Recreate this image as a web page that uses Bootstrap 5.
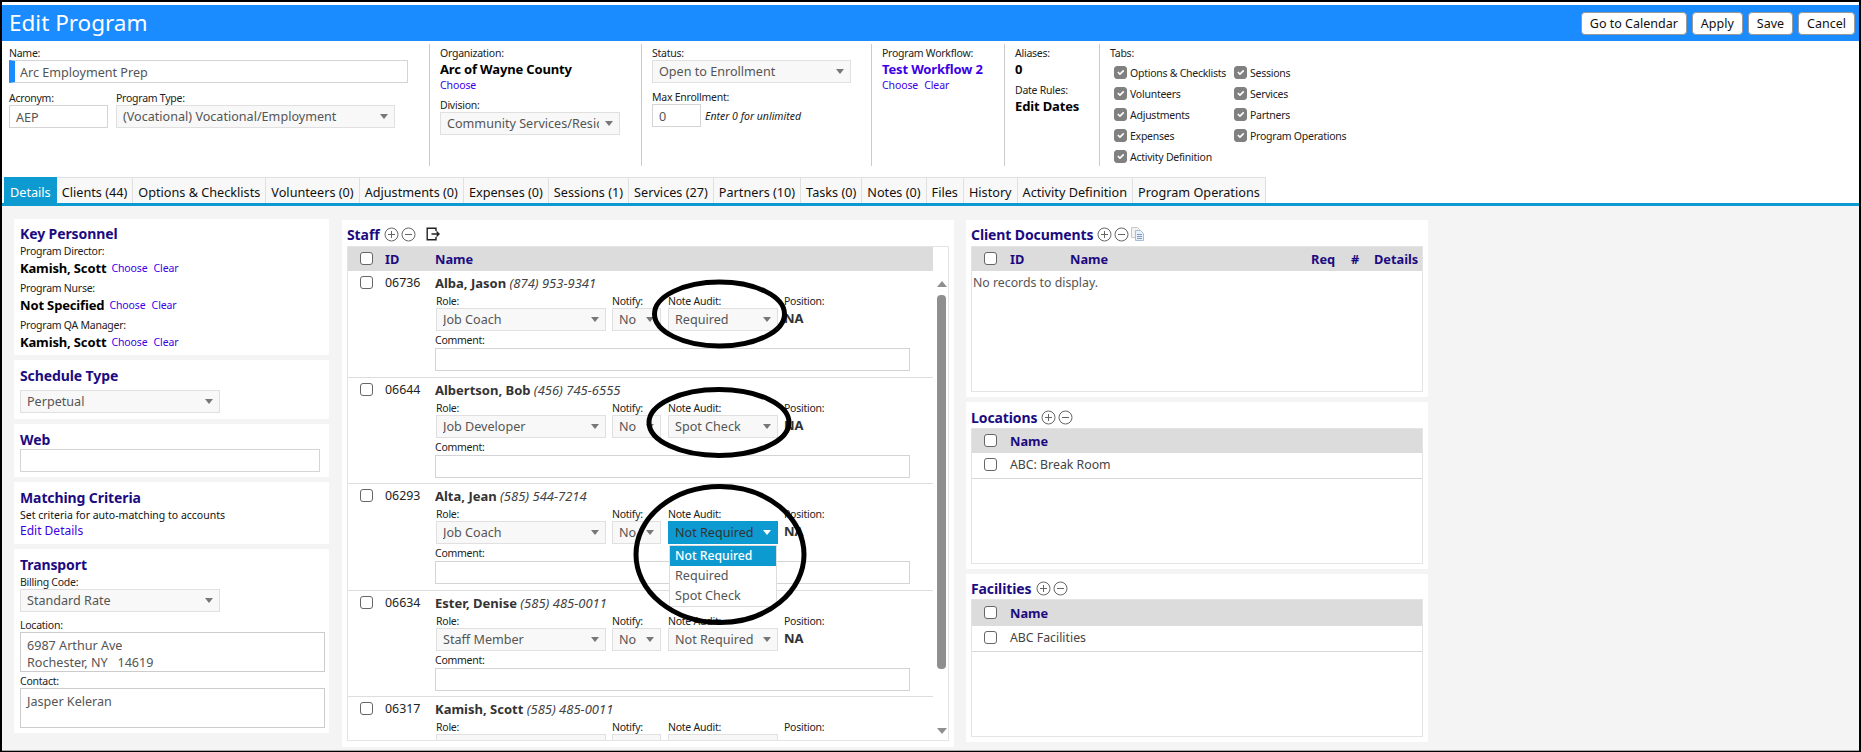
<!DOCTYPE html>
<html lang="en">
<head>
<meta charset="utf-8">
<title>Edit Program</title>
<link rel="stylesheet" href="https://cdn.jsdelivr.net/npm/bootstrap@5.3.0/dist/css/bootstrap.min.css">
<style>
html,body{height:752px;overflow:hidden;background:#000}
body{font-family:"Noto Sans",sans-serif;font-size:12px;color:#222;line-height:14px}
a{color:#3d00e6;text-decoration:none}
.frame{position:relative;width:1861px;height:752px;border:solid #000;border-width:2px 2px 1px;background:#fff;display:flex;flex-direction:column}
.topgap{height:3px;flex:none}
.hdr{height:36px;flex:none;background:#1a8cff;padding:0 4px 0 7px}
.hdr h1{font-size:22.5px;line-height:36px;margin:0;color:#fff;font-weight:400}
.hbtns{gap:5px}
.hbtn{height:23px;padding:0 8px;background:#fff;border:1px solid #999;border-radius:4px;color:#111;font-size:12.5px;line-height:21px;--bs-btn-hover-bg:#fff}
.panel{height:136px;flex:none;padding-top:3px}
.pcol{height:122px;border-left:1px solid #ccc;padding:2px 0 0 10px;flex:none}
.pc1{width:427px;border-left:0;padding-left:7px}
.pc2{width:212px}.pc3{width:230px}.pc4{width:133px}.pc5{width:95px}.pc6{width:300px}
.flabel{font-size:10.5px;letter-spacing:-.25px;line-height:14px;color:#222;display:block;white-space:nowrap}
.strong{font-weight:700;font-size:13px;letter-spacing:-.15px;line-height:18px;color:#000;white-space:nowrap}
.strong-link{color:#3d00e6}
.lnk{font-size:10.5px;letter-spacing:-.1px;line-height:14px}
.lnk a+a{margin-left:6px}
.fld,.fsel{height:23px;border:1px solid #d4d4d4;border-radius:0;padding:1px 6px 0;font-size:12.6px;color:#555;box-shadow:none;background-color:#fff;line-height:20px}
.fsel{background-color:#f8f8f8;border-color:#e0e0e0;padding:1px 20px 0 6px;background-image:url("data:image/svg+xml,%3Csvg xmlns='http://www.w3.org/2000/svg' width='8' height='5'%3E%3Cpath d='M0 0h8L4 5z' fill='%23777'/%3E%3C/svg%3E");background-size:8px 5px;background-position:right 6px center}
.w-name{width:399px;border-left:6px solid #1a8cff;padding-left:5px}
.w-acr{width:99px}.w-type{width:279px}.w-div{width:180px}.w-status{width:199px}.w-max{width:49px}
.w-200{width:200px}.w-web{width:300px}.w-role{width:170px}.w-notify{width:49px}.w-audit{width:110px}.w-comment{width:475px}
.mt-8px{margin-top:8px}.mt-7px{margin-top:7px}.mt-6px{margin-top:6px}.mt-5px{margin-top:5px}.mt-2px{margin-top:2px}
.acr-pad{padding-top:1px;line-height:13px}
.note{font-size:10.5px;font-style:italic;color:#222}
.checks{display:grid;grid-template-rows:repeat(5,21px);grid-auto-flow:column;grid-template-columns:120px 140px;margin:2px 0 0 4px}
.ck{display:flex;align-items:center;gap:3px;font-size:10.5px;letter-spacing:-.25px;white-space:nowrap}
.form-check-input.cb{width:13px;height:13px;margin:0;flex:none;border:1px solid #666;border-radius:3px;box-shadow:none}
.form-check-input.cb:checked{background-color:#808080;border-color:#808080}
.tabbar{flex:none;height:29px;border-bottom:3px solid #0c9ad1;padding-left:2px;gap:0;flex-wrap:nowrap}
.tabbar .nav-link{height:26px;padding:3px 5px 0;font-size:12.68px;line-height:23px;color:#111;background:#f8f8f8;border:1px solid #e0e0e0;border-bottom:0;border-left-width:0;border-radius:0;white-space:nowrap}
.tabbar .nav-item:first-child .nav-link{border-left-width:1px}
.tabbar .nav-link.active{background:#0c9ad1;color:#fff;border-color:#0c9ad1}
.workspace{flex:1 1 auto;min-height:0;background:#f4f4f4;border-bottom:1px solid #aaa;padding-left:12px}
.lcol{width:315px;padding-top:13px;gap:5px;flex:none}
.mcol{width:612px;margin:14px 0 0 13px;flex:none}
.rcol{width:462px;margin:14px 0 0 12px;gap:5px;flex:none}
.pane{background:#fff;border:0;border-radius:0;padding:5px 5px 0 6px}
.ttl{font-size:14px;font-weight:700;letter-spacing:-.1px;line-height:20px;color:#1c0b80;margin:0}
.personnel{height:136px}
.sched{height:59px}.webp{height:53px}.match{height:62px}.trans{height:184px}
.sched,.webp,.match,.trans{padding-top:6px}
.pick{display:flex;align-items:center;gap:5px;height:18px;padding-top:2px}
.pick .lnk{white-space:nowrap}
.mb-neg{margin-bottom:-1px}
.mt-4px{margin-top:4px}
.small12{font-size:10.5px;line-height:14px;color:#111}
.bigl{font-size:12px;line-height:18px}
.area{height:40px;width:305px;border:1px solid #ccc;padding:3.5px 6px;font-size:12.6px;line-height:17px;color:#555;border-radius:0;resize:none;box-shadow:none;display:block;overflow:hidden}
.staffp{height:527px;padding:5px 5px 0}
.headline{margin-bottom:1px}
.tframe{border:1px solid #e4e4e4;display:flex;flex-direction:column}
.stf{height:495px}
.thead-row{height:24px;flex:none;width:585px;background:#dcdcdc;display:flex;align-items:center;font-weight:700;color:#1c0b80;font-size:12.8px;padding:0 0 0 12px}
.c-ck{width:25px;flex:none}
.c-id{width:50px;flex:none}
.tbody{height:470px;overflow:hidden}
.rows{width:585px;flex:none}
.srow{height:106.5px;border-bottom:1px solid #ddd;padding:3px 0 0 12px;display:flex}
.srow .c-ck .cb{margin-top:2px}
.srow .c-id{line-height:18px;font-size:12.4px;color:#222}
.pname{line-height:18px;font-weight:700;font-size:13px;color:#333;white-space:nowrap}
.pname i{font-weight:400;font-size:13px;color:#444}
.cells{display:flex;gap:6px;margin:2px 0 0 1px}
.cells .gap7{margin-left:1px}
.na{font-weight:700;font-size:13px;line-height:18px;color:#333;margin-top:1px}
.fsel.open{background-color:#0c9ad1;border-color:#0c9ad1;color:#333;background-image:url("data:image/svg+xml,%3Csvg xmlns='http://www.w3.org/2000/svg' width='8' height='5'%3E%3Cpath d='M0 0h8L4 5z' fill='%23fff'/%3E%3C/svg%3E")}
.menuw{position:relative}
.audit-menu{display:block;position:absolute;top:24px;left:1px;width:108px;min-width:0;padding:0;margin:0;border:1px solid #ddd;border-radius:0;z-index:5;height:62px;box-shadow:none}
.audit-menu .dropdown-item{padding:0 5px;line-height:20px;height:20px;color:#555;font-size:12.6px}
.audit-menu .dropdown-item.active{background:#0c9ad1;color:#fff;font-weight:500;font-size:12.2px}
.cmt{margin-top:2px}.cmt .fld{margin-top:1px;display:block}
.sbar{width:17px;flex:none;display:flex;flex-direction:column;align-items:center}
.up{width:0;height:0;border:solid transparent;border-width:0 5px 6px;border-bottom-color:#8f8f8f;margin-top:10px}
.dn{width:0;height:0;border:solid transparent;border-width:6px 5px 0;border-top-color:#8f8f8f;margin-top:59px}
.thumb{width:9px;height:374px;background:#8f8f8f;border-radius:4px;margin-top:8px}
.rp{padding:5px 5px 0}
.locs{padding-top:6px}
.docs{height:177px}.locs{height:167px}.facs{height:168px}
.docs .tframe{height:146px}.locs .tframe{height:136px}.facs .tframe{height:138px}
.gtable{--bs-table-bg:transparent;margin:0;table-layout:fixed;font-size:12.3px;color:#444}
.gtable th{background:#dcdcdc;color:#1c0b80;font-weight:700;font-size:12.8px;padding:0;height:24px;vertical-align:middle;border:0;line-height:14px}
.facs .gtable th{height:26px}
.gtable td{padding:0;height:25px;vertical-align:middle;border-bottom:1px solid #d8d8d8;color:#444}
.gtable .cbc{padding-left:12px;width:38px}
.w-id{width:60px}.w-req{width:40px}.w-hash{width:23px}.w-det{width:48px}
.empty{padding:5px 1px;color:#555;font-size:12.3px}
.ico{flex:none;display:block;margin-top:-2px}
.ms-2px{margin-left:2px}.ms-4px{margin-left:4px}.ms-10px{margin-left:10px}
.annot{position:absolute;left:-2px;top:-2px;pointer-events:none;z-index:10}
</style>
</head>
<body>
<div class="frame">
  <div class="topgap"></div>
  <div class="hdr d-flex justify-content-between align-items-center">
    <h1>Edit Program</h1>
    <div class="d-flex hbtns">
      <button class="btn hbtn">Go to Calendar</button>
      <button class="btn hbtn">Apply</button>
      <button class="btn hbtn">Save</button>
      <button class="btn hbtn">Cancel</button>
    </div>
  </div>

  <div class="panel d-flex">
    <div class="pcol pc1">
      <span class="flabel">Name:</span>
      <input class="form-control fld w-name" value="Arc Employment Prep">
      <div class="d-flex gap-2 mt-8px">
        <div class="ms-0"><span class="flabel acr-pad">Acronym:</span><input class="form-control fld w-acr" value="AEP"></div>
        <div><span class="flabel">Program Type:</span><select class="form-select fsel w-type"><option>(Vocational) Vocational/Employment</option></select></div>
      </div>
    </div>
    <div class="pcol pc2">
      <span class="flabel">Organization:</span>
      <div class="strong">Arc of Wayne County</div>
      <div class="lnk"><a href="#">Choose</a></div>
      <span class="flabel mt-6px">Division:</span>
      <select class="form-select fsel w-div"><option>Community Services/Residential</option></select>
    </div>
    <div class="pcol pc3">
      <span class="flabel">Status:</span>
      <select class="form-select fsel w-status"><option>Open to Enrollment</option></select>
      <span class="flabel mt-7px">Max Enrollment:</span>
      <div class="d-flex align-items-center gap-1">
        <input class="form-control fld w-max" value="0">
        <span class="note">Enter 0 for unlimited</span>
      </div>
    </div>
    <div class="pcol pc4">
      <span class="flabel">Program Workflow:</span>
      <div class="strong"><a class="strong-link" href="#">Test Workflow 2</a></div>
      <div class="lnk"><a href="#">Choose</a><a href="#">Clear</a></div>
    </div>
    <div class="pcol pc5">
      <span class="flabel">Aliases:</span>
      <div class="strong">0</div>
      <span class="flabel mt-5px">Date Rules:</span>
      <div class="strong">Edit Dates</div>
    </div>
    <div class="pcol pc6">
      <span class="flabel">Tabs:</span>
      <div class="checks">
        <label class="ck"><input class="form-check-input cb" type="checkbox" checked>Options &amp; Checklists</label>
        <label class="ck"><input class="form-check-input cb" type="checkbox" checked>Volunteers</label>
        <label class="ck"><input class="form-check-input cb" type="checkbox" checked>Adjustments</label>
        <label class="ck"><input class="form-check-input cb" type="checkbox" checked>Expenses</label>
        <label class="ck"><input class="form-check-input cb" type="checkbox" checked>Activity Definition</label>
        <label class="ck"><input class="form-check-input cb" type="checkbox" checked>Sessions</label>
        <label class="ck"><input class="form-check-input cb" type="checkbox" checked>Services</label>
        <label class="ck"><input class="form-check-input cb" type="checkbox" checked>Partners</label>
        <label class="ck"><input class="form-check-input cb" type="checkbox" checked>Program Operations</label>
      </div>
    </div>
  </div>

  <ul class="nav tabbar">
    <li class="nav-item"><a class="nav-link active" href="#">Details</a></li>
    <li class="nav-item"><a class="nav-link" href="#">Clients (44)</a></li>
    <li class="nav-item"><a class="nav-link" href="#">Options &amp; Checklists</a></li>
    <li class="nav-item"><a class="nav-link" href="#">Volunteers (0)</a></li>
    <li class="nav-item"><a class="nav-link" href="#">Adjustments (0)</a></li>
    <li class="nav-item"><a class="nav-link" href="#">Expenses (0)</a></li>
    <li class="nav-item"><a class="nav-link" href="#">Sessions (1)</a></li>
    <li class="nav-item"><a class="nav-link" href="#">Services (27)</a></li>
    <li class="nav-item"><a class="nav-link" href="#">Partners (10)</a></li>
    <li class="nav-item"><a class="nav-link" href="#">Tasks (0)</a></li>
    <li class="nav-item"><a class="nav-link" href="#">Notes (0)</a></li>
    <li class="nav-item"><a class="nav-link" href="#">Files</a></li>
    <li class="nav-item"><a class="nav-link" href="#">History</a></li>
    <li class="nav-item"><a class="nav-link" href="#">Activity Definition</a></li>
    <li class="nav-item"><a class="nav-link" href="#">Program Operations</a></li>
  </ul>

  <div class="workspace d-flex align-items-start">
    <div class="lcol d-flex flex-column">
      <div class="card pane personnel">
        <h5 class="ttl">Key Personnel</h5>
        <span class="flabel">Program Director:</span>
        <div class="pick"><span class="strong">Kamish, Scott</span><span class="lnk"><a href="#">Choose</a><a href="#">Clear</a></span></div>
        <span class="flabel mt-5px">Program Nurse:</span>
        <div class="pick"><span class="strong">Not Specified</span><span class="lnk"><a href="#">Choose</a><a href="#">Clear</a></span></div>
        <span class="flabel mt-5px">Program QA Manager:</span>
        <div class="pick"><span class="strong">Kamish, Scott</span><span class="lnk"><a href="#">Choose</a><a href="#">Clear</a></span></div>
      </div>
      <div class="card pane sched">
        <h5 class="ttl">Schedule Type</h5>
        <select class="form-select fsel w-200 mt-4px"><option>Perpetual</option></select>
      </div>
      <div class="card pane webp">
        <h5 class="ttl mb-neg">Web</h5>
        <input class="form-control fld w-web">
      </div>
      <div class="card pane match">
        <h5 class="ttl">Matching Criteria</h5>
        <div class="small12">Set criteria for auto-matching to accounts</div>
        <div class="bigl"><a href="#">Edit Details</a></div>
      </div>
      <div class="card pane trans">
        <h5 class="ttl">Transport</h5>
        <span class="flabel">Billing Code:</span>
        <select class="form-select fsel w-200"><option>Standard Rate</option></select>
        <span class="flabel mt-6px">Location:</span>
        <textarea class="form-control area" rows="2">6987 Arthur Ave
Rochester, NY   14619</textarea>
        <span class="flabel mt-2px">Contact:</span>
        <textarea class="form-control area" rows="2">Jasper Keleran</textarea>
      </div>
    </div>

    <div class="mcol">
      <div class="card pane staffp">
        <div class="d-flex align-items-center headline">
          <h5 class="ttl">Staff</h5>
          <svg class="ico ms-4px" width="15" height="15" viewBox="0 0 15 15" fill="none" stroke="#666"><circle cx="7.5" cy="7.5" r="6.5"/><path d="M7.500 4v7M4 7.500h7"/></svg>
          <svg class="ico ms-2px" width="15" height="15" viewBox="0 0 15 15" fill="none" stroke="#666"><circle cx="7.5" cy="7.5" r="6.5"/><path d="M4 7.500h7"/></svg>
          <svg class="ico ms-10px" width="14" height="14" viewBox="0 0 14 14" fill="none" stroke="#222" stroke-width="1.4"><path d="M10 4V1.200H1.200v11.600H10V10"/><path d="M5.500 7H13M10.500 4.600 13 7l-2.500 2.400"/></svg>
        </div>
        <div class="tframe stf">
          <div class="thead-row"><div class="c-ck"><input class="form-check-input cb" type="checkbox"></div><div class="c-id">ID</div><div>Name</div></div>
          <div class="d-flex tbody">
            <div class="rows">
              <div class="srow">
                <div class="c-ck"><input class="form-check-input cb" type="checkbox"></div><div class="c-id">06736</div>
                <div>
                  <div class="pname">Alba, Jason <i>(874) 953-9341</i></div>
                  <div class="cells">
                    <div><span class="flabel">Role:</span><select class="form-select fsel w-role"><option>Job Coach</option></select></div>
                    <div><span class="flabel">Notify:</span><select class="form-select fsel w-notify"><option>No</option></select></div>
                    <div class="gap7"><span class="flabel">Note Audit:</span><select class="form-select fsel w-audit"><option>Required</option></select></div>
                    <div><span class="flabel">Position:</span><div class="na">NA</div></div>
                  </div>
                  <div class="cmt"><span class="flabel">Comment:</span><input class="form-control fld w-comment"></div>
                </div>
              </div>
              <div class="srow">
                <div class="c-ck"><input class="form-check-input cb" type="checkbox"></div><div class="c-id">06644</div>
                <div>
                  <div class="pname">Albertson, Bob <i>(456) 745-6555</i></div>
                  <div class="cells">
                    <div><span class="flabel">Role:</span><select class="form-select fsel w-role"><option>Job Developer</option></select></div>
                    <div><span class="flabel">Notify:</span><select class="form-select fsel w-notify"><option>No</option></select></div>
                    <div class="gap7"><span class="flabel">Note Audit:</span><select class="form-select fsel w-audit"><option>Spot Check</option></select></div>
                    <div><span class="flabel">Position:</span><div class="na">NA</div></div>
                  </div>
                  <div class="cmt"><span class="flabel">Comment:</span><input class="form-control fld w-comment"></div>
                </div>
              </div>
              <div class="srow">
                <div class="c-ck"><input class="form-check-input cb" type="checkbox"></div><div class="c-id">06293</div>
                <div>
                  <div class="pname">Alta, Jean <i>(585) 544-7214</i></div>
                  <div class="cells">
                    <div><span class="flabel">Role:</span><select class="form-select fsel w-role"><option>Job Coach</option></select></div>
                    <div><span class="flabel">Notify:</span><select class="form-select fsel w-notify"><option>No</option></select></div>
                    <div class="gap7"><span class="flabel">Note Audit:</span>
                      <div class="menuw"><select class="form-select fsel open w-audit"><option>Not Required</option></select>
                        <ul class="dropdown-menu show audit-menu">
                          <li><a class="dropdown-item active" href="#">Not Required</a></li>
                          <li><a class="dropdown-item" href="#">Required</a></li>
                          <li><a class="dropdown-item" href="#">Spot Check</a></li>
                        </ul>
                      </div>
                    </div>
                    <div><span class="flabel">Position:</span><div class="na">NA</div></div>
                  </div>
                  <div class="cmt"><span class="flabel">Comment:</span><input class="form-control fld w-comment"></div>
                </div>
              </div>
              <div class="srow">
                <div class="c-ck"><input class="form-check-input cb" type="checkbox"></div><div class="c-id">06634</div>
                <div>
                  <div class="pname">Ester, Denise <i>(585) 485-0011</i></div>
                  <div class="cells">
                    <div><span class="flabel">Role:</span><select class="form-select fsel w-role"><option>Staff Member</option></select></div>
                    <div><span class="flabel">Notify:</span><select class="form-select fsel w-notify"><option>No</option></select></div>
                    <div class="gap7"><span class="flabel">Note Audit:</span><select class="form-select fsel w-audit"><option>Not Required</option></select></div>
                    <div><span class="flabel">Position:</span><div class="na">NA</div></div>
                  </div>
                  <div class="cmt"><span class="flabel">Comment:</span><input class="form-control fld w-comment"></div>
                </div>
              </div>
              <div class="srow">
                <div class="c-ck"><input class="form-check-input cb" type="checkbox"></div><div class="c-id">06317</div>
                <div>
                  <div class="pname">Kamish, Scott <i>(585) 485-0011</i></div>
                  <div class="cells">
                    <div><span class="flabel">Role:</span><select class="form-select fsel w-role"><option>Not Specified</option></select></div>
                    <div><span class="flabel">Notify:</span><select class="form-select fsel w-notify"><option>No</option></select></div>
                    <div class="gap7"><span class="flabel">Note Audit:</span><select class="form-select fsel w-audit"><option>Not Required</option></select></div>
                    <div><span class="flabel">Position:</span><div class="na">NA</div></div>
                  </div>
                </div>
              </div>
            </div>
            <div class="sbar"><div class="up"></div><div class="thumb"></div><div class="dn"></div></div>
          </div>
        </div>
      </div>
    </div>

    <div class="rcol d-flex flex-column">
      <div class="card pane rp docs">
        <div class="d-flex align-items-center headline">
          <h5 class="ttl me-1">Client Documents</h5>
          <svg class="ico" width="15" height="15" viewBox="0 0 15 15" fill="none" stroke="#666"><circle cx="7.5" cy="7.5" r="6.5"/><path d="M7.500 4v7M4 7.500h7"/></svg>
          <svg class="ico ms-2px" width="15" height="15" viewBox="0 0 15 15" fill="none" stroke="#666"><circle cx="7.5" cy="7.5" r="6.5"/><path d="M4 7.500h7"/></svg>
          <svg class="ico ms-2px" width="13" height="14" viewBox="0 0 13 14"><path d="M.5.500h6l2 2v8h-8z" fill="#f2f2f2" stroke="#c8c8c8"/><path d="M4.500 3.500h5l3 3v7h-8z" fill="#e8f0fa" stroke="#a9bdd6"/><path d="M6 7.500h5M6 9.500h5M6 11.500h5" stroke="#7d9cc4"/></svg>
        </div>
        <div class="tframe">
          <table class="table gtable">
            <thead><tr><th class="cbc"><input class="form-check-input cb" type="checkbox"></th><th class="w-id">ID</th><th>Name</th><th class="w-req">Req</th><th class="w-hash">#</th><th class="w-det">Details</th></tr></thead>
          </table>
          <div class="empty">No records to display.</div>
        </div>
      </div>
      <div class="card pane rp locs">
        <div class="d-flex align-items-center">
          <h5 class="ttl me-1">Locations</h5>
          <svg class="ico" width="15" height="15" viewBox="0 0 15 15" fill="none" stroke="#666"><circle cx="7.5" cy="7.5" r="6.5"/><path d="M7.500 4v7M4 7.500h7"/></svg>
          <svg class="ico ms-2px" width="15" height="15" viewBox="0 0 15 15" fill="none" stroke="#666"><circle cx="7.5" cy="7.5" r="6.5"/><path d="M4 7.500h7"/></svg>
        </div>
        <div class="tframe">
          <table class="table gtable">
            <thead><tr><th class="cbc"><input class="form-check-input cb" type="checkbox"></th><th>Name</th></tr></thead>
            <tbody><tr><td class="cbc"><input class="form-check-input cb" type="checkbox"></td><td>ABC: Break Room</td></tr></tbody>
          </table>
        </div>
      </div>
      <div class="card pane rp facs">
        <div class="d-flex align-items-center">
          <h5 class="ttl me-1">Facilities</h5>
          <svg class="ico" width="15" height="15" viewBox="0 0 15 15" fill="none" stroke="#666"><circle cx="7.5" cy="7.5" r="6.5"/><path d="M7.500 4v7M4 7.500h7"/></svg>
          <svg class="ico ms-2px" width="15" height="15" viewBox="0 0 15 15" fill="none" stroke="#666"><circle cx="7.5" cy="7.5" r="6.5"/><path d="M4 7.500h7"/></svg>
        </div>
        <div class="tframe">
          <table class="table gtable">
            <thead><tr><th class="cbc"><input class="form-check-input cb" type="checkbox"></th><th>Name</th></tr></thead>
            <tbody><tr><td class="cbc"><input class="form-check-input cb" type="checkbox"></td><td>ABC Facilities</td></tr></tbody>
          </table>
        </div>
      </div>
    </div>
  </div>

  <svg class="annot" width="1861" height="752" fill="none" stroke="#000" stroke-width="5">
    <ellipse cx="719.500" cy="314" rx="65" ry="32"/>
    <ellipse cx="719" cy="422.500" rx="70" ry="33"/>
    <ellipse cx="720" cy="554.500" rx="84" ry="68"/>
  </svg>
</div>
<script src="https://cdn.jsdelivr.net/npm/bootstrap@5.3.0/dist/js/bootstrap.bundle.min.js"></script>
</body>
</html>
